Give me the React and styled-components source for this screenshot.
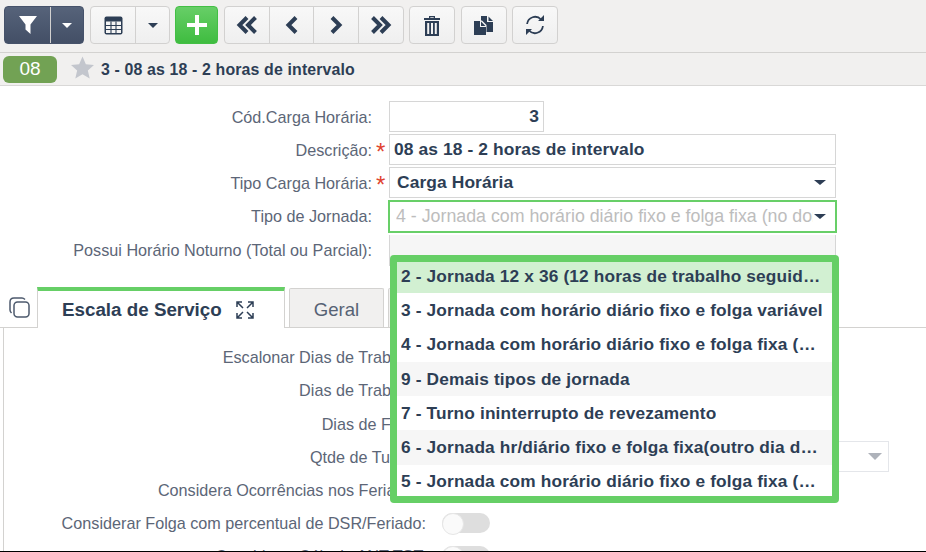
import React from "react";
import styled, { createGlobalStyle } from "styled-components";

const Global = createGlobalStyle`
  html, body { margin: 0; padding: 0; background: #fff; }
  body { font-family: "Liberation Sans", Arial, sans-serif; color: #2d3e55; overflow: hidden; }
  * { box-sizing: border-box; }
`;
const Page = styled.div`
  width: 926px; height: 552px; display: flex; flex-direction: column; position: relative; overflow: hidden; background: #fff;
`;
const Toolbar = styled.div`
  height: 53px; flex: none; background: #f1f0ef; border-bottom: 1px solid #d3d2d0;
  display: flex; align-items: flex-start; padding: 6px 0 0 4px; gap: 5px;
`;
const Group = styled.div`
  display: flex; height: 38px; border-radius: 4px; overflow: hidden;
  border: 1px solid ${p => p.$variant === "dark" ? "#46526a" : p.$variant === "green" ? "#43bf45" : "#d2d1d0"};
  background: ${p => p.$variant === "dark" ? "linear-gradient(#56637a,#434f66)" : p.$variant === "green" ? "linear-gradient(#67ce67,#3fbc40)" : "linear-gradient(#f8f8f8,#efefef)"};
  margin-left: ${p => p.$ml || 0}px;
`;
const Btn = styled.div`
  width: ${p => p.$w}px; height: 100%; display: flex; align-items: center; justify-content: center; flex: none;
  & + & { border-left: 1px solid ${p => p.$dark ? "#5d6980" : "#d2d1d0"}; }
`;
const Crumb = styled.div`
  height: 33px; flex: none; background: #f1f0ef; border-bottom: 1px solid #d9d8d7; display: flex; align-items: center; padding-left: 3px;
`;
const Badge = styled.div`
  width: 54px; height: 27px; border-radius: 6px; background: #72a254; color: #fff; font-size: 19px; display: flex; align-items: center; justify-content: center;
`;
const Star = styled.svg`margin: -3px 7px 0 14px; flex: none;`;
const CrumbTitle = styled.div`font-size: 15.9px; font-weight: 700; letter-spacing: .14px; color: #2d3e55; padding-top: 2px;`;
const Form = styled.div`
  padding-top: 15px; flex: none; display: flex; flex-direction: column; gap: 2px; background: #fff;
`;
const Row = styled.div`
  display: grid; grid-template-columns: 372px 17px 447px; align-items: center; height: ${p => p.$h || 31}px;
`;
const Label = styled.div`
  font-size: 16.2px; color: #5c6677; text-align: right; white-space: nowrap; padding-top: ${p => p.$flat ? 0 : 2}px;
`;
const Req = styled.div`color: #e0432f; font-size: 24px; line-height: 1; padding: 6px 0 0 4px; height: 100%;`;
const Input = styled.div`
  height: 100%; border: 1px solid #d6d6d6; background: #fff; display: flex; align-items: center; padding: 0 4px;
  width: ${p => p.$w || "auto"}; justify-content: ${p => p.$right ? "flex-end" : "flex-start"};
  font-size: 17.4px; font-weight: 700; color: #2d3e55; letter-spacing: .1px;
`;
const SelectBox = styled(Input)`
  padding: 0 9px 0 7px; justify-content: space-between;
`;
const FocusSelect = styled.div`
  margin: 0 -1px; height: 33px; border: 2px solid #68cf68; display: flex; align-items: center; gap: 1px; padding: 0 9px 0 6px;
  color: #bdbdbd; font-size: 17.8px; background: #fff;
`;
const SelectText = styled.span`white-space: nowrap; overflow: hidden; flex: 1; min-width: 0;`;
const Caret = styled.span`
  width: 0; height: 0; flex: none;
  border-left: ${p => p.$s || 6}px solid transparent; border-right: ${p => p.$s || 6}px solid transparent;
  border-top: ${p => (p.$s || 6) - (p.$s === 7.5 ? 0 : 0.5)}px solid ${p => p.$c || "#2d3e55"};
`;
const Gray = styled.div`height: 100%; background: #f6f6f6; border: 1px solid #d6d6d6; border-top: 0;`;
const TabsRow = styled.div`
  flex: none; height: 41px; margin-top: 21px; display: flex; align-items: flex-end; border-bottom: 1px solid #d3d2d0; padding-left: 9px; gap: 4px;
`;
const CopyIcon = styled.svg`margin: 0 3px 9px 0; flex: none;`;
const ActiveTab = styled.div`
  width: 248px; height: 41px; margin-bottom: -1px; background: #fff; border: 1px solid #d3d2d0; border-top: 4px solid #66cf66; border-bottom: 0;
  display: flex; align-items: center; padding-left: 24px; gap: 14px; font-size: 18.8px; font-weight: 700; color: #2d3e55;
`;
const Tab = styled.div`
  width: ${p => p.$w}px; height: 39px; background: #f1f0ef; border: 1px solid #d3d2d0; border-bottom: 0; border-radius: 2px 2px 0 0; display: flex; align-items: center; justify-content: center;
  font-size: 18.6px; color: #566274; flex: none; padding-top: 3px;
`;
const Panel = styled.div`
  flex: 1; min-height: 0; border-left: 1px solid #d3d2d0; margin-left: 3px; padding-top: 12px; overflow: hidden;
`;
const PanelRow = styled.div`
  display: grid; grid-template-columns: 422px 48px 383px; column-gap: 16px; align-items: center; height: 33.3px;
`;
const Toggle = styled.div`
  width: 48px; height: 20px; border-radius: 10px; background: #dedede; position: relative; flex: none;
  &::before { content: ""; position: absolute; left: 0; top: 0; width: 20px; height: 20px; border-radius: 50%; background: #fafafa; border: 1px solid #e6e6e6; }
`;
const DisabledSelect = styled.div`
  height: 31px; border: 1px solid #e4e6ea; display: flex; justify-content: flex-end; align-items: center; padding-right: 6px; background: #fff;
`;
const Bottom = styled.div`height: 1px; flex: none; background: #000;`;
const Dropdown = styled.div`
  position: absolute; left: 390px; top: 255px; width: 449px; height: 248px; overflow: hidden; background: #fff; border: 7px solid #66cf66; border-radius: 4px;
`;
const OptionList = styled.div`margin-top: -3px;`;
const Option = styled.div`
  height: 34.3px; display: flex; align-items: center; padding: 0 9px 0 4px; font-size: 17.3px; font-weight: 700; color: #2d3e55; letter-spacing: .15px;
  background: ${p => p.$bg || "#fff"};
  span { white-space: nowrap; overflow: hidden; text-overflow: ellipsis; }
`;

const Filter = () => <svg width="20" height="20" viewBox="0 0 20 20"><path d="M1 1h18L12.500 9.500v9.500L7.500 14.500V9.500z" fill="#fff"/></svg>;
const TableIcon = () => <svg width="19" height="19" viewBox="0 0 19 19" fill="none"><rect x="0.5" y="0.5" width="18" height="18" rx="2" fill="#2d3e55"/><path d="M2 5.500h15v11.500H2z" fill="#f4f4f4"/><path d="M2 9.500h15M2 13.500h15M7 5.500V17M12 5.500V17" stroke="#2d3e55" strokeWidth="1.100"/></svg>;
const Plus = () => <svg width="20" height="20" viewBox="0 0 20 20"><path d="M8 0h4v8h8v4h-8v8H8v-8H0V8h8z" fill="#fff"/></svg>;
const Chev = ({ d }) => <svg width="22" height="20" viewBox="0 0 22 20" fill="none" stroke="#2d3e55" strokeWidth="4"><path d={d}/></svg>;
const Trash = () => <svg width="16" height="21" viewBox="0 0 16 21"><path d="M5 3V1h6v2h5v2H0V3zM6.300 2.200v.8h3.400v-.8z" fill="#2d3e55"/><path d="M1 6h14v15H1zM3.200 8v11h2V8zM7 8v11h2V8zM10.800 8v11h2V8z" fill="#2d3e55" fillRule="evenodd"/></svg>;
const Copy = () => <svg width="20" height="19" viewBox="0 0 20 19"><path d="M7 0h6v6h6v10h-6.500V9L8 4.500H7z M14.500 .5L19 5h-4.500z" fill="#2d3e55"/><path d="M0 5h6v6h6v8H0zM7 5.500L11.500 10H7z" fill="#2d3e55"/></svg>;
const Refresh = () => <svg width="20" height="20" viewBox="0 0 20 20" fill="none"><path d="M2.100 9A8 8 0 0 1 16 4.500M17.900 11A8 8 0 0 1 4 15.500" stroke="#2d3e55" strokeWidth="1.800"/><path d="M13 6h6V0zM7 14H1v6z" fill="#2d3e55"/></svg>;
const Expand = () => <svg width="18" height="18" viewBox="0 0 18 18" fill="none" stroke="#2d3e55" strokeWidth="1.500"><path d="M1 6V1h5M12 1h5v5M17 12v5h-5M6 17H1v-5M1.500 1.500L7 7M16.500 1.500L11 7M16.500 16.500L11 11M1.500 16.500L7 11"/></svg>;

const options = [
  ["2 - Jornada 12 x 36 (12 horas de trabalho seguidas)", "#d2f0d2"],
  ["3 - Jornada com horário diário fixo e folga variável", "#fff"],
  ["4 - Jornada com horário diário fixo e folga fixa (no domingo)", "#fff"],
  ["9 - Demais tipos de jornada", "#f6f6f6"],
  ["7 - Turno ininterrupto de revezamento", "#fff"],
  ["6 - Jornada hr/diário fixo e folga fixa(outro dia da semana)", "#f6f6f6"],
  ["5 - Jornada com horário diário fixo e folga fixa (no sábado)", "#fff"],
];

export default function App() {
  return (
    <Page>
      <Global />
      <Toolbar>
        <Group $variant="dark">
          <Btn $w={45} $dark><Filter /></Btn>
          <Btn $w={33} $dark><Caret $s={5.5} $c="#fff" /></Btn>
        </Group>
        <Group $ml={1}>
          <Btn $w={44}><TableIcon /></Btn>
          <Btn $w={34}><Caret $s={5.5} /></Btn>
        </Group>
        <Group $variant="green"><Btn $w={41}><Plus /></Btn></Group>
        <Group $ml={1}>
          <Btn $w={44}><Chev d="M11 2.500L3.500 10l7.500 7.500M19.500 2.500L12 10l7.500 7.500" /></Btn>
          <Btn $w={44}><Chev d="M15 2.500L7.500 10l7.500 7.500" /></Btn>
          <Btn $w={45}><Chev d="M7 2.500L14.500 10 7 17.500" /></Btn>
          <Btn $w={45}><Chev d="M2.500 2.500L10 10l-7.500 7.500M11 2.500L18.500 10 11 17.500" /></Btn>
        </Group>
        <Group><Btn $w={44}><Trash /></Btn></Group>
        <Group $ml={1}><Btn $w={44}><Copy /></Btn></Group>
        <Group><Btn $w={44}><Refresh /></Btn></Group>
      </Toolbar>
      <Crumb>
        <Badge>08</Badge>
        <Star width="23" height="23" viewBox="0 0 24 23"><path d="M12 0l3.500 8 8.500.800-6.400 5.700L19.500 23 12 18.500 4.500 23l1.900-8.500L0 8.800 8.500 8z" fill="#c3c6cd"/></Star>
        <CrumbTitle>3 - 08 as 18 - 2 horas de intervalo</CrumbTitle>
      </Crumb>
      <Form>
        <Row><Label>Cód.Carga Horária:</Label><span /><Input $w="155px" $right>3</Input></Row>
        <Row><Label>Descrição:</Label><Req>*</Req><Input>08 as 18 - 2 horas de intervalo</Input></Row>
        <Row><Label>Tipo Carga Horária:</Label><Req>*</Req><SelectBox>Carga Horária<Caret /></SelectBox></Row>
        <Row $h={33}><Label $flat>Tipo de Jornada:</Label><span /><FocusSelect><SelectText>4 - Jornada com horário diário fixo e folga fixa (no domingo)</SelectText><Caret /></FocusSelect></Row>
        <Row><Label $flat>Possui Horário Noturno (Total ou Parcial):</Label><span /><Gray /></Row>
      </Form>
      <TabsRow>
        <CopyIcon width="21" height="21" viewBox="0 0 21 21" fill="none" stroke="#4d5a6d" strokeWidth="1.500"><rect x="5" y="5" width="15" height="15" rx="3.500"/><path d="M16 2.500C15 1.500 14 1 13 1H5C2.500 1 1 2.500 1 5v8c0 1 .5 2 1.500 3"/></CopyIcon>
        <ActiveTab>Escala de Serviço<Expand /></ActiveTab>
        <Tab $w={95}>Geral</Tab>
        <Tab $w={40} />
      </TabsRow>
      <Panel>
        <PanelRow><Label>Escalonar Dias de Trabalho:</Label><Toggle /></PanelRow>
        <PanelRow><Label>Dias de Trabalho:</Label></PanelRow>
        <PanelRow><Label>Dias de Folga:</Label></PanelRow>
        <PanelRow><Label>Qtde de Turnos:</Label><span /><DisabledSelect><Caret $s={7.5} $c="#aeb2ba" /></DisabledSelect></PanelRow>
        <PanelRow><Label>Considera Ocorrências nos Feriados:</Label><Toggle /></PanelRow>
        <PanelRow><Label $flat>Considerar Folga com percentual de DSR/Feriado:</Label><Toggle /></PanelRow>
        <PanelRow><Label $flat>Considerar Cálculo ANT TST:</Label><Toggle /></PanelRow>
      </Panel>
      <Bottom />
      <Dropdown>
        <OptionList>
          {options.map(([t, bg]) => <Option key={t} $bg={bg}><span>{t}</span></Option>)}
        </OptionList>
      </Dropdown>
    </Page>
  );
}
